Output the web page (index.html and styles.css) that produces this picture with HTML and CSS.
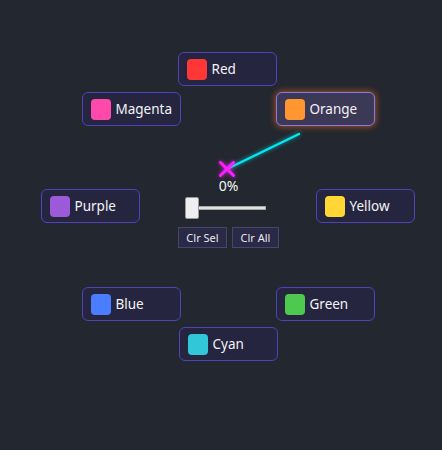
FILE: index.html
```html
<!DOCTYPE html>
<html>
<head>
<meta charset="utf-8">
<link rel="stylesheet" href="styles.css">
</head>
<body>
<div class="stage">
  <svg class="overlay" width="442" height="450" viewBox="0 0 442 450">
    <line class="beam" x1="227" y1="169" x2="299" y2="134"/>
    <g class="cross">
      <line x1="220.5" y1="162.5" x2="233.5" y2="175.5"/>
      <line x1="233.5" y1="162.5" x2="220.5" y2="175.5"/>
    </g>
  </svg>

  <div class="chip pos-red"><span class="sw c-red"></span>Red</div>
  <div class="chip pos-orange active"><span class="sw c-orange"></span>Orange</div>
  <div class="chip pos-magenta"><span class="sw c-magenta"></span>Magenta</div>
  <div class="chip pos-purple"><span class="sw c-purple"></span>Purple</div>
  <div class="chip pos-yellow"><span class="sw c-yellow"></span>Yellow</div>
  <div class="chip pos-blue"><span class="sw c-blue"></span>Blue</div>
  <div class="chip pos-green"><span class="sw c-green"></span>Green</div>
  <div class="chip pos-cyan"><span class="sw c-cyan"></span>Cyan</div>

  <div class="center">
    <div class="pct">0%</div>
    <div class="slider">
      <div class="track"></div>
      <div class="thumb"></div>
    </div>
    <div class="btns">
      <div class="btn sel">Clr Sel</div>
      <div class="btn all">Clr All</div>
    </div>
  </div>
</div>
</body>
</html>
```

FILE: styles.css
```css
html, body {
  margin: 0;
  padding: 0;
  background: #23272f;
}
body {
  font-family: "Noto Sans", "Open Sans", sans-serif;
  color: #f0f0f5;
}
.stage {
  position: relative;
  width: 442px;
  height: 450px;
  overflow: hidden;
}
.overlay {
  position: absolute;
  left: 0;
  top: 0;
  z-index: 2;
  pointer-events: none;
}
.beam {
  stroke: #00e8f2;
  stroke-width: 2.5;
  stroke-linecap: round;
  filter: drop-shadow(0 0 2px rgba(0, 232, 242, 0.7));
}
.cross line {
  stroke: #ff1cff;
  stroke-width: 3;
  stroke-linecap: round;
}
.cross {
  filter: drop-shadow(0 0 2px rgba(255, 30, 255, 0.8));
}
.chip {
  position: absolute;
  box-sizing: border-box;
  width: 99px;
  height: 34px;
  display: flex;
  align-items: center;
  gap: 5px;
  padding-left: 7.5px;
  background: #26253f;
  border: 1.5px solid #5042b8;
  border-radius: 6px;
  font-size: 13.5px;
  color: #f2f2f7;
}
.chip.active {
  background: #3b3956;
  border-color: #8a79e0;
  box-shadow: 0 0 6px 1px rgba(255, 110, 40, 0.55);
}
.sw {
  width: 20px;
  height: 21px;
  border-radius: 4px;
  flex: none;
}
.c-red { background: #ff3737; }
.c-orange { background: #ff9630; }
.c-magenta { background: #ff4aab; }
.c-purple { background: #9d5ad8; }
.c-yellow { background: #ffd633; }
.c-blue { background: #4a7dff; }
.c-green { background: #4ec84e; }
.c-cyan { background: #31c6d8; }

.pos-red { left: 178px; top: 52px; }
.pos-orange { left: 276px; top: 92px; }
.pos-magenta { left: 82px; top: 92px; }
.pos-purple { left: 41px; top: 189px; }
.pos-yellow { left: 316px; top: 189px; }
.pos-blue { left: 82px; top: 287px; }
.pos-green { left: 276px; top: 287px; }
.pos-cyan { left: 179px; top: 327px; }

.center {
  position: absolute;
  left: 178px;
  top: 177px;
  width: 101px;
  display: flex;
  flex-direction: column;
  align-items: center;
}
.pct {
  font-size: 14px;
  line-height: 18px;
  color: #f5f5f8;
}
.slider {
  position: relative;
  align-self: flex-start;
  margin-left: 7px;
  margin-top: 2px;
  width: 81px;
  height: 22px;
}
.track {
  position: absolute;
  left: 0;
  right: 0;
  top: 9px;
  height: 4px;
  box-sizing: border-box;
  background: #e2e2e2;
  border: 1px solid #a8a8a8;
}
.thumb {
  position: absolute;
  left: 0;
  top: 0;
  width: 14px;
  height: 22px;
  box-sizing: border-box;
  background: #efefef;
  border: 1px solid #9a9a9a;
  border-radius: 2px;
}
.btns {
  margin-top: 8px;
  display: flex;
  gap: 5px;
}
.btn {
  box-sizing: border-box;
  height: 21px;
  display: flex;
  align-items: center;
  justify-content: center;
  background: #2a2946;
  border: 1px solid #46456c;
  font-size: 11px;
  color: #e8e8f0;
}
.btn.sel { width: 49px; }
.btn.all { width: 47px; }
```
